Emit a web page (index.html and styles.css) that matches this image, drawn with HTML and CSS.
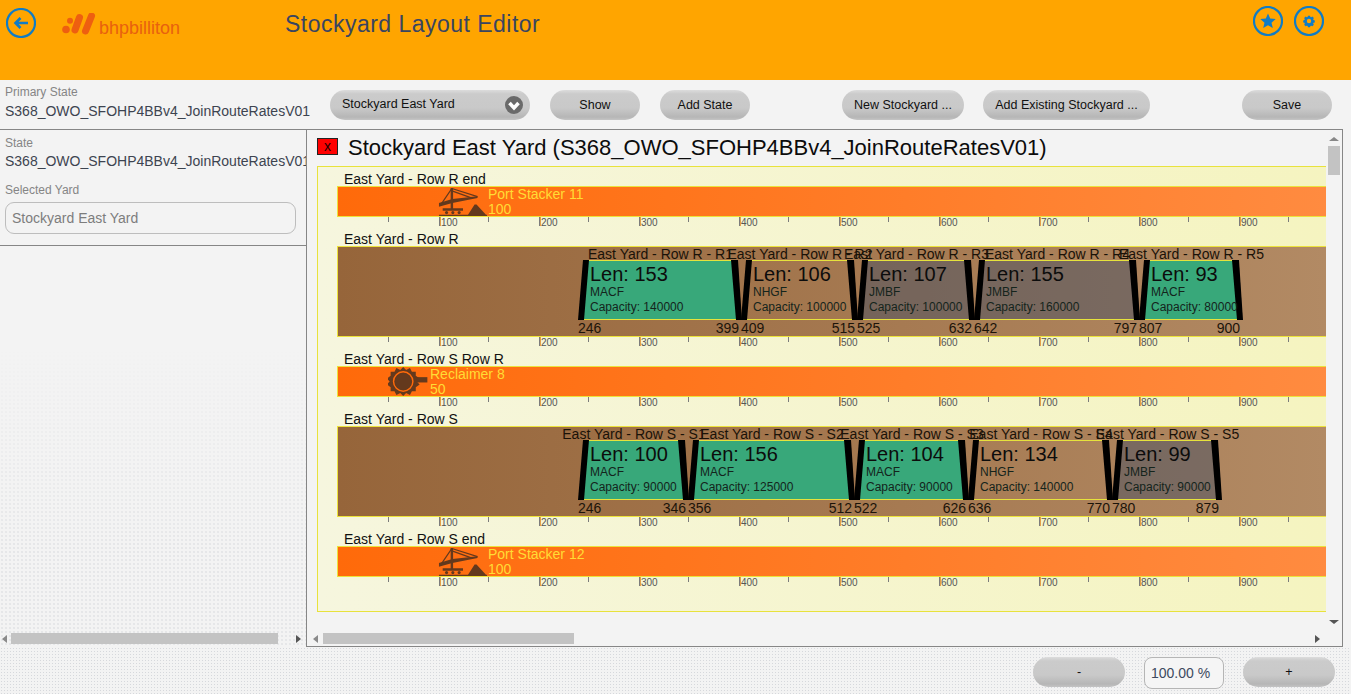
FILE: index.html
```html
<!DOCTYPE html>
<html lang="en">
<head>
<meta charset="utf-8">
<title>Stockyard Layout Editor</title>
<link rel="stylesheet" href="styles.css">
</head>
<body>
<div class="app">
  <header class="header">
    <button class="round back" aria-label="Back">
      <svg viewBox="0 0 30 30" class="round-svg"><circle cx="15" cy="15" r="14" class="ring"/><path d="M22 15H10M14.5 10 9.5 15l5 5" class="arrow"/></svg>
    </button>
    <div class="logo">
      <svg class="logo-mark" viewBox="0 0 34 24"><circle cx="4" cy="16.500" r="3.800"/><circle cx="8" cy="7.700" r="3"/><path d="M17.500 4.500 13 17" class="logo-bar"/><path d="M29.500 3 23.500 18" class="logo-bar"/></svg>
      <span class="logo-text">bhpbilliton</span>
    </div>
    <h1 class="title">Stockyard Layout Editor</h1>
    <div class="header-actions">
      <button class="round" aria-label="Favourite">
        <svg viewBox="0 0 30 30" class="round-svg"><circle cx="15" cy="15" r="14" class="ring"/><path d="M15 7.5l2.2 5.1 5.5.5-4.2 3.6 1.3 5.4-4.8-2.9-4.8 2.9 1.3-5.4-4.2-3.6 5.5-.5z" class="glyph"/></svg>
      </button>
      <button class="round" aria-label="Settings">
        <svg viewBox="0 0 30 30" class="round-svg"><circle cx="15" cy="15" r="14" class="ring"/><g transform="translate(15 15) scale(.76) translate(-15 -16)"><path d="M13.6 9h2.8l.4 1.6 1.2.5 1.4-.9 2 2-.9 1.4.5 1.2 1.6.4v2.800l-1.600.4-.5 1.200.9 1.400-2 2-1.400-.9-1.200.5-.4 1.600h-2.800l-.4-1.600-1.200-.5-1.400.9-2-2 .9-1.400-.5-1.200-1.600-.4v-2.800l1.600-.4.5-1.200-.9-1.400 2-2 1.400.9 1.200-.5z" class="glyph"/></g><circle cx="15" cy="15" r="2.200" class="gear-hole"/></svg>
      </button>
    </div>
  </header>

  <section class="toolbar">
    <div class="primary">
      <div class="field-label">Primary State</div>
      <div class="field-value">S368_OWO_SFOHP4BBv4_JoinRouteRatesV01</div>
    </div>
    <button class="pill pill-select">
      <span>Stockyard East Yard</span>
      <svg class="chevron" viewBox="0 0 18 18"><circle cx="9" cy="9" r="9"/><path d="M4.500 7 9 12l4.500-5"/></svg>
    </button>
    <button class="pill pill-m gap-s">Show</button>
    <button class="pill pill-m gap-s">Add State</button>
    <button class="pill pill-new gap-l">New Stockyard ...</button>
    <button class="pill pill-add gap-s">Add Existing Stockyard ...</button>
    <button class="pill pill-m gap-l">Save</button>
  </section>

  <main class="workspace">
    <aside class="sidebar">
      <div class="side-info">
        <div class="field-label">State</div>
        <div class="field-value clip">S368_OWO_SFOHP4BBv4_JoinRouteRatesV01</div>
        <div class="field-label selected">Selected Yard</div>
        <div class="text-box">Stockyard East Yard</div>
      </div>
      <div class="side-empty"></div>
      <div class="hscroll side-scroll">
        <span class="tri tri-left"></span><span class="thumb side-thumb"></span><span class="tri tri-right"></span>
      </div>
    </aside>

    <section class="pane">
      <div class="canvas">
        <div class="canvas-title">
          <span class="close-box">x</span>
          <h2 class="yard-title">Stockyard East Yard (S368_OWO_SFOHP4BBv4_JoinRouteRatesV01)</h2>
        </div>
        <div class="yard">
          <div class="tracks">

            <div class="track">
              <div class="track-name">East Yard - Row R end</div>
              <div class="bar bar-machine">
                <div class="equip" style="left:100px">
                  <svg class="icon-stacker" viewBox="0 0 50 30"><use href="#stacker"/></svg>
                  <div class="equip-text"><div>Port Stacker 11</div><div>100</div></div>
                </div>
              </div>
              <div class="ruler"><span>100</span><span>200</span><span>300</span><span>400</span><span>500</span><span>600</span><span>700</span><span>800</span><span>900</span></div>
            </div>

            <div class="track">
              <div class="track-name">East Yard - Row R</div>
              <div class="bar bar-row">
                <div class="pile" style="left:247px;width:153px">
                  <svg class="pile-shape"><polygon class="macf" points="0,0 150,0 154,60 -4,60"/><path class="edge" d="M0 .5H150M-3 59.500H153"/><polygon class="post" points="-2,0 4,0 -1,60 -7,60"/><polygon class="post" points="146,0 153,0 157,60 151,60"/></svg>
                  <div class="pile-name">East Yard - Row R - R1</div>
                  <div class="pile-len">Len: 153</div><div class="pile-meta">MACF</div><div class="pile-meta">Capacity: 140000</div>
                  <span class="pile-start">246</span><span class="pile-end">399</span>
                </div>
                <div class="pile" style="left:410px;width:106px">
                  <svg class="pile-shape"><polygon class="nhgf" points="0,0 103,0 107,60 -4,60"/><path class="edge" d="M0 .5H103M-3 59.500H106"/><polygon class="post" points="-2,0 4,0 -1,60 -7,60"/><polygon class="post" points="99,0 106,0 110,60 104,60"/></svg>
                  <div class="pile-name">East Yard - Row R - R2</div>
                  <div class="pile-len">Len: 106</div><div class="pile-meta">NHGF</div><div class="pile-meta">Capacity: 100000</div>
                  <span class="pile-start">409</span><span class="pile-end">515</span>
                </div>
                <div class="pile" style="left:526px;width:107px">
                  <svg class="pile-shape"><polygon class="jmbf" points="0,0 104,0 108,60 -4,60"/><path class="edge" d="M0 .5H104M-3 59.500H107"/><polygon class="post" points="-2,0 4,0 -1,60 -7,60"/><polygon class="post" points="100,0 107,0 111,60 105,60"/></svg>
                  <div class="pile-name">East Yard - Row R - R3</div>
                  <div class="pile-len">Len: 107</div><div class="pile-meta">JMBF</div><div class="pile-meta">Capacity: 100000</div>
                  <span class="pile-start">525</span><span class="pile-end">632</span>
                </div>
                <div class="pile" style="left:643px;width:155px">
                  <svg class="pile-shape"><polygon class="jmbf" points="0,0 152,0 156,60 -4,60"/><path class="edge" d="M0 .5H152M-3 59.500H155"/><polygon class="post" points="-2,0 4,0 -1,60 -7,60"/><polygon class="post" points="148,0 155,0 159,60 153,60"/></svg>
                  <div class="pile-name">East Yard - Row R - R4</div>
                  <div class="pile-len">Len: 155</div><div class="pile-meta">JMBF</div><div class="pile-meta">Capacity: 160000</div>
                  <span class="pile-start">642</span><span class="pile-end">797</span>
                </div>
                <div class="pile" style="left:808px;width:93px">
                  <svg class="pile-shape"><polygon class="macf" points="0,0 90,0 94,60 -4,60"/><path class="edge" d="M0 .5H90M-3 59.500H93"/><polygon class="post" points="-2,0 4,0 -1,60 -7,60"/><polygon class="post" points="86,0 93,0 97,60 91,60"/></svg>
                  <div class="pile-name">East Yard - Row R - R5</div>
                  <div class="pile-len">Len: 93</div><div class="pile-meta">MACF</div><div class="pile-meta">Capacity: 80000</div>
                  <span class="pile-start">807</span><span class="pile-end">900</span>
                </div>
              </div>
              <div class="ruler"><span>100</span><span>200</span><span>300</span><span>400</span><span>500</span><span>600</span><span>700</span><span>800</span><span>900</span></div>
            </div>

            <div class="track">
              <div class="track-name">East Yard - Row S Row R</div>
              <div class="bar bar-machine">
                <div class="equip" style="left:50px">
                  <svg class="icon-reclaimer" viewBox="0 0 42 30">
                    <path class="machine-dark" d="M15 0l3 3 4-2 2 4 4 0 0 4 4 3-3 3 3 3-4 3 0 4-4 0-2 4-4-2-3 3-3-3-4 2-2-4-4 0 0-4-4-3 3-3-3-3 4-3 0-4 4 0 2-4 4 2z"/>
                    <circle class="machine-ring" cx="15" cy="15" r="10"/>
                    <circle class="machine-dark" cx="15" cy="15" r="8.500"/>
                    <path class="machine-dark" d="M27 10.500H40v5.500H27z"/>
                  </svg>
                  <div class="equip-text"><div>Reclaimer 8</div><div>50</div></div>
                </div>
              </div>
              <div class="ruler"><span>100</span><span>200</span><span>300</span><span>400</span><span>500</span><span>600</span><span>700</span><span>800</span><span>900</span></div>
            </div>

            <div class="track">
              <div class="track-name">East Yard - Row S</div>
              <div class="bar bar-row">
                <div class="pile" style="left:247px;width:100px">
                  <svg class="pile-shape"><polygon class="macf" points="0,0 97,0 101,60 -4,60"/><path class="edge" d="M0 .5H97M-3 59.500H100"/><polygon class="post" points="-2,0 4,0 -1,60 -7,60"/><polygon class="post" points="93,0 100,0 104,60 98,60"/></svg>
                  <div class="pile-name">East Yard - Row S - S1</div>
                  <div class="pile-len">Len: 100</div><div class="pile-meta">MACF</div><div class="pile-meta">Capacity: 90000</div>
                  <span class="pile-start">246</span><span class="pile-end">346</span>
                </div>
                <div class="pile" style="left:357px;width:156px">
                  <svg class="pile-shape"><polygon class="macf" points="0,0 153,0 157,60 -4,60"/><path class="edge" d="M0 .5H153M-3 59.500H156"/><polygon class="post" points="-2,0 4,0 -1,60 -7,60"/><polygon class="post" points="149,0 156,0 160,60 154,60"/></svg>
                  <div class="pile-name">East Yard - Row S - S2</div>
                  <div class="pile-len">Len: 156</div><div class="pile-meta">MACF</div><div class="pile-meta">Capacity: 125000</div>
                  <span class="pile-start">356</span><span class="pile-end">512</span>
                </div>
                <div class="pile" style="left:523px;width:104px">
                  <svg class="pile-shape"><polygon class="macf" points="0,0 101,0 105,60 -4,60"/><path class="edge" d="M0 .5H101M-3 59.500H104"/><polygon class="post" points="-2,0 4,0 -1,60 -7,60"/><polygon class="post" points="97,0 104,0 108,60 102,60"/></svg>
                  <div class="pile-name">East Yard - Row S - S3</div>
                  <div class="pile-len">Len: 104</div><div class="pile-meta">MACF</div><div class="pile-meta">Capacity: 90000</div>
                  <span class="pile-start">522</span><span class="pile-end">626</span>
                </div>
                <div class="pile" style="left:637px;width:134px">
                  <svg class="pile-shape"><polygon class="nhgf" points="0,0 131,0 135,60 -4,60"/><path class="edge" d="M0 .5H131M-3 59.500H134"/><polygon class="post" points="-2,0 4,0 -1,60 -7,60"/><polygon class="post" points="127,0 134,0 138,60 132,60"/></svg>
                  <div class="pile-name">East Yard - Row S - S4</div>
                  <div class="pile-len">Len: 134</div><div class="pile-meta">NHGF</div><div class="pile-meta">Capacity: 140000</div>
                  <span class="pile-start">636</span><span class="pile-end">770</span>
                </div>
                <div class="pile" style="left:781px;width:99px">
                  <svg class="pile-shape"><polygon class="jmbf" points="0,0 96,0 100,60 -4,60"/><path class="edge" d="M0 .5H96M-3 59.500H99"/><polygon class="post" points="-2,0 4,0 -1,60 -7,60"/><polygon class="post" points="92,0 99,0 103,60 97,60"/></svg>
                  <div class="pile-name">East Yard - Row S - S5</div>
                  <div class="pile-len">Len: 99</div><div class="pile-meta">JMBF</div><div class="pile-meta">Capacity: 90000</div>
                  <span class="pile-start">780</span><span class="pile-end">879</span>
                </div>
              </div>
              <div class="ruler"><span>100</span><span>200</span><span>300</span><span>400</span><span>500</span><span>600</span><span>700</span><span>800</span><span>900</span></div>
            </div>

            <div class="track">
              <div class="track-name">East Yard - Row S end</div>
              <div class="bar bar-machine">
                <div class="equip" style="left:100px">
                  <svg class="icon-stacker" viewBox="0 0 50 30"><use href="#stacker"/></svg>
                  <div class="equip-text"><div>Port Stacker 12</div><div>100</div></div>
                </div>
              </div>
              <div class="ruler"><span>100</span><span>200</span><span>300</span><span>400</span><span>500</span><span>600</span><span>700</span><span>800</span><span>900</span></div>
            </div>

          </div>
        </div>
      </div>
      <div class="vscroll">
        <span class="tri tri-up"></span><span class="thumb v-thumb"></span><span class="tri tri-down"></span>
      </div>
      <div class="hscroll main-scroll">
        <span class="tri tri-left"></span><span class="thumb main-thumb"></span><span class="tri tri-right"></span>
      </div>
    </section>
  </main>

  <footer class="footer">
    <button class="pill pill-zoom">-</button>
    <div class="zoom-value">100.00 %</div>
    <button class="pill pill-zoom">+</button>
  </footer>
</div>

<svg class="defs" width="0" height="0" aria-hidden="true">
  <symbol id="stacker" viewBox="0 0 50 30">
    <path class="machine-dark" d="M0 16.500 14 12.500 40 9.500V11.500L14 16.500 0 20.500z"/>
    <path class="machine-thick" d="M13.500 1V23"/>
    <path class="machine-thin" d="M13.500 1.500 40 10M13.500 4 33 11M13.500 1.500 3 17"/>
    <path class="machine-dark" d="M4 22H25V24.500H4z"/>
    <circle class="machine-dark" cx="8" cy="26.500" r="1.600"/><circle class="machine-dark" cx="14.500" cy="26.500" r="1.600"/><circle class="machine-dark" cx="21" cy="26.500" r="1.600"/>
    <path class="machine-dark" d="M0 28.800H50V30H0zM30 29 37 18 39 18 49 29z"/>
  </symbol>
</svg>
</body>
</html>
```

FILE: styles.css
```css
* { box-sizing: border-box; }
html, body { margin: 0; padding: 0; height: 100%; overflow: hidden; }
body { background: #f3f3f3; font-family: "Liberation Sans", Arial, sans-serif; color: #222; }
button { font-family: inherit; border: 0; padding: 0; margin: 0; cursor: pointer; }
h1, h2 { margin: 0; font-weight: 400; }

.app { display: grid; grid-template-rows: 80px 49px 518px 47px; width: 1351px; height: 694px; }

/* header */
.header { position: relative; display: flex; background: #ffa500; padding: 8px 27px 0 6px; }
.round { width: 30px; height: 30px; background: none; flex: none; display: block; }
.round-svg { display: block; width: 30px; height: 30px; }
.ring { fill: none; stroke: #107cc6; stroke-width: 2.2; }
.arrow { fill: none; stroke: #107cc6; stroke-width: 2.600; }
.glyph { fill: #107cc6; }
.gear-hole { fill: #ffa500; }
.logo { display: flex; align-items: center; width: 223px; height: 24px; margin: 5px 0 0 26px; gap: 3px; flex: none; }
.logo-mark { width: 34px; height: 24px; fill: #ee5f10; flex: none; }
.logo-bar { fill: none; stroke: #ee5f10; stroke-width: 7; stroke-linecap: round; }
.logo-text { font-size: 18px; color: #e8610f; line-height: 24px; padding-top: 6px; }
.title { font-size: 23px; line-height: 32px; color: #3a4560; letter-spacing: .48px; }
.header-actions { display: flex; gap: 11px; margin-left: auto; margin-top: -2px; }

/* toolbar */
.toolbar { display: flex; align-items: flex-start; padding-top: 10px; }
.primary { width: 330px; padding-left: 5px; flex: none; margin-top: -5px; }
.field-label { font-size: 12px; line-height: 14px; color: #858585; }
.field-value { font-size: 14px; line-height: 18px; color: #3d4450; margin-top: 3px; white-space: nowrap; }
.clip { overflow: hidden; }

.pill {
  height: 30px; border-radius: 15px; flex: none; font-size: 12.5px; color: #111; line-height: 27px; text-align: center;
  background: linear-gradient(#dcdcdc 0, #cbcbcb 4px, #c9c9c9 18px, #b6b6b6 27px, #c4c4c4 30px);
}
.pill-select { width: 200px; display: flex; align-items: center; justify-content: space-between; padding: 0 7px 0 12px; }
.pill-select span { margin-top: -2px; }
.chevron { width: 18px; height: 18px; margin-top: 0; fill: #6a6a6a; }
.chevron path { fill: none; stroke: #fff; stroke-width: 3.500; }
.pill-m { width: 90px; }
.pill-new { width: 122px; }
.pill-add { width: 167px; }
.gap-s { margin-left: 20px; }
.gap-l { margin-left: 92px; }
.pill-new + .pill-add { margin-left: 19px; }

/* workspace */
.workspace { display: flex; height: 518px; }
.sidebar { position: relative; width: 306px; flex: none; border-top: 1px solid #868686; display: flex; flex-direction: column; }
.side-info { padding: 6px 0 0 5px; height: 116px; border-bottom: 1px solid #868686; flex: none; }
.side-info .field-value { margin-top: 2px; }
.selected { margin-top: 13px; }
.text-box { width: 291px; height: 32px; margin-top: 5px; border: 1px solid #bdbdbd; border-radius: 9px; font-size: 14px; line-height: 30px; color: #7d7d7d; padding-left: 6px; }
.side-empty { flex: 1; background-image: radial-gradient(#d6d8dc .6px, transparent .8px); background-size: 4px 4px; -webkit-mask-image: linear-gradient(transparent 25%, #000 75%); mask-image: linear-gradient(transparent 25%, #000 75%); }

.pane { position: relative; width: 1037px; flex: none; border: 1px solid #868686; overflow: hidden; }
.canvas { padding-left: 10px; }
.canvas-title { display: flex; align-items: center; height: 36px; gap: 10px; }
.close-box { width: 21px; height: 17px; margin-top: -3px; background: #f00; border: 1px solid #222; font-size: 14px; line-height: 14px; text-align: center; color: #200; flex: none; }
.yard-title { font-size: 22px; line-height: 36px; color: #0c0c0c; white-space: nowrap; }

.yard { width: 1009px; height: 446px; border: 1px solid #e8e23c; border-right: 0; background: linear-gradient(to right, #f6f6de, #f5f4c0); overflow: hidden; }
.tracks { margin-top: -1px; padding-left: 19px; }
.track-name { height: 20px; font-size: 14px; line-height: 26px; color: #111; padding-left: 7px; white-space: nowrap; }
.bar { position: relative; border: 1px solid #ece23a; margin-right: -2px; }
.bar-machine { height: 31px; background: linear-gradient(to right, #ff6a0a, #ff8b40); }
.bar-row { height: 91px; background: linear-gradient(to right, #96653a, #b28a64); }
.ruler {
  height: 10px; margin-top: -1px; padding-left: 51px; display: flex; font-size: 10px; line-height: 14px; color: #555;
  background-image: linear-gradient(to right, #7c7c7c 1px, transparent 1px), linear-gradient(to right, #7c7c7c 1px, #e2a048 1px, #e2a048 2px, transparent 2px);
  background-size: 100px 6px, 100px 10px;
  background-position: 0 0, 51px 0;
  background-repeat: repeat-x;
  background-origin: content-box;
  background-clip: content-box;
}
.ruler span { width: 100px; flex: none; transform: translateX(53px); }

.equip { position: absolute; top: 0; display: flex; }
.icon-stacker { width: 50px; height: 29px; display: block; flex: none; }
.icon-reclaimer { width: 42px; height: 29px; display: block; flex: none; }
.equip-text { font-size: 14px; line-height: 15px; color: #ffdc35; white-space: nowrap; }
.machine-dark { fill: #64391d; }
.machine-ring { fill: none; stroke: #ff6a0a; stroke-width: 1.500; }
.machine-thick { fill: none; stroke: #64391d; stroke-width: 2.500; }
.machine-thin { fill: none; stroke: #64391d; stroke-width: 1.200; }
.defs { position: absolute; }

.pile { position: absolute; top: 13px; height: 60px; padding: 3px 0 0 5px; white-space: nowrap; color: #111; }
.pile-shape { position: absolute; left: 0; top: 0; width: 100%; height: 60px; overflow: visible; }
.macf { fill: #38a87a; }
.nhgf { fill: none; }
.jmbf { fill: rgba(70, 80, 100, .5); }
.edge { fill: none; stroke: #e6e23c; stroke-width: 1; }
.post { fill: #000; }
.pile-name { position: absolute; left: -101px; right: -99px; top: -13px; text-align: center; font-size: 14px; line-height: 14px; color: #1a1208; }
.pile-len, .pile-meta { position: relative; }
.pile-len { font-size: 20px; line-height: 22px; color: #0c0c0c; }
.pile-meta { font-size: 12px; line-height: 15px; color: #14241c; }
.pile-start, .pile-end { position: absolute; top: 60px; font-size: 14px; line-height: 16px; color: #1c140a; }
.pile-start { left: -7px; }
.pile-end { right: -1px; }

/* scrollbars */
.hscroll { position: absolute; display: flex; align-items: center; height: 11px; }
.side-scroll { left: 0; bottom: 3px; width: 301px; padding-left: 2px; }
.main-scroll { left: 6px; bottom: 2px; width: 1007px; }
.thumb { display: block; background: #c3c3c3; flex: none; }
.side-thumb { width: 267px; height: 11px; margin-left: 4px; }
.main-thumb { width: 251px; height: 11px; margin-left: 5px; }
.tri { display: block; width: 0; height: 0; border-style: solid; border-color: transparent; flex: none; }
.tri-left { border-width: 4px 5px 4px 0; border-right-color: #8a8a8a; }
.tri-right { border-width: 4px 0 4px 5px; border-left-color: #555; margin-left: auto; }
.tri-up { border-width: 0 5px 4px; border-bottom-color: #888; }
.tri-down { border-width: 4px 5px 0; border-top-color: #555; margin-top: auto; }
.vscroll { position: absolute; right: 2px; top: 7px; width: 12px; height: 487px; display: flex; flex-direction: column; align-items: center; }
.v-thumb { width: 12px; height: 29px; margin-top: 5px; }

/* footer */
.footer {
  display: flex; justify-content: flex-end; gap: 19px; padding: 10px 16px 0 0; align-items: flex-start;
  background-image: radial-gradient(#d6d8dc .6px, transparent .8px); background-size: 3px 3px;
}
.pill-zoom { width: 92px; }
.zoom-value { width: 80px; height: 32px; border: 1px solid #b5b5b5; border-radius: 8px; background: #f5f5f5; font-size: 14px; line-height: 30px; padding-left: 6px; color: #3d4a60; }
```
